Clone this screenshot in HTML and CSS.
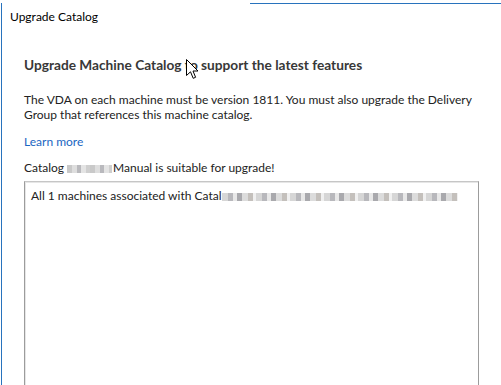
FILE: index.html
```html
<!DOCTYPE html>
<html lang="en">
<head>
  <meta charset="UTF-8">
  <title>Upgrade Catalog</title>
  <link rel="stylesheet" href="styles.css">
</head>
<body>
<div class="window">
  <div class="title">Upgrade Catalog</div>

  <div class="content">
    <h1 class="heading">Upgrade Machine Catalog to support the latest features</h1>
    <p class="desc">The VDA on each machine must be version 1811. You must also upgrade the Delivery Group that references this machine catalog.</p>
    <a class="link" href="#">Learn more</a>
    <p class="status">Catalog <span class="blur short"></span>Manual is suitable for upgrade!</p>

    <div class="box">
      <p class="box-line">All 1 machines associated with Catal<span class="blur long"></span></p>
    </div>
  </div>
</div>

<!--mouse pointer over the heading-->
<svg class="cursor" width="13" height="21" viewBox="0 0 13 21">
  <path d="M0.5 0.5 L0.5 16.5 L4.5 12.8 L7.2 19.3 L9.6 18.3 L7 12 L12 12 Z" fill="#fff" stroke="#000" stroke-width="1" stroke-linejoin="miter"/>
</svg>
</body>
</html>
```

FILE: styles.css
```css
html, body {
  margin: 0;
  padding: 0;
  background: #fff;
}

body {
  position: relative;
  height: 385px;
  overflow: hidden;
  font-family: "Segoe UI", Lato, sans-serif;
  color: #1a1a1a;
}

.window {
  position: relative;
  margin: 3px 0 0 1px;
  border-left: 1px solid #2873bd;
  height: 400px;
}

/*the frame line only shows on the right part of the top*/
.window::before {
  content: "";
  position: absolute;
  top: 0;
  left: 248px;
  right: 0;
  border-top: 1px solid #2873bd;
}

.title {
  padding: 6px 0 0 8px;
  font-size: 12px;
  line-height: 16px;
  color: #000;
}

.content {
  padding: 0 0 0 22px;
  width: 456px;
}

.heading {
  margin: 30px 0 0;
  font-size: 13.7px;
  line-height: 20px;
  font-weight: 700;
  color: #383838;
}

.desc {
  margin: 17px 0 0;
  font-size: 12px;
  line-height: 15px;
  color: #222;
}

.link {
  display: block;
  margin-top: 12px;
  font-size: 12px;
  line-height: 16px;
  color: #1a66c2;
  text-decoration: none;
}

.status {
  margin: 10px 0 0;
  font-size: 12px;
  line-height: 16px;
  color: #222;
}

.blur {
  display: inline-block;
  height: 8px;
  vertical-align: -1px;
}

.blur.short {
  width: 45px;
  margin-right: 1px;
  background: repeating-linear-gradient(90deg, #c9c9c9 0 5px, #dedede 5px 10px, #b9b9bd 10px 14px, #e4e4e4 14px 19px, #cfcfcf 19px 23px);
}

.blur.long {
  width: 236px;
  background: repeating-linear-gradient(90deg, #d6d6d6 0 6px, #b8b8bc 6px 11px, #e8e8e8 11px 15px, #a9a9ad 15px 20px, #dcdcdc 20px 26px, #c4c0bc 26px 31px, #f0f0f0 31px 34px);
}

.box {
  margin-top: 5px;
  width: 453px;
  height: 220px;
  border: 1px solid #9c9c9c;
  border-top-color: #c6c6c6;
  box-shadow: inset 1px 1px 0 #e6e6e6;
}

.box-line {
  margin: 6px 0 0 6px;
  font-size: 12px;
  line-height: 16px;
  color: #222;
}

.cursor {
  position: absolute;
  left: 186px;
  top: 59px;
}
```
